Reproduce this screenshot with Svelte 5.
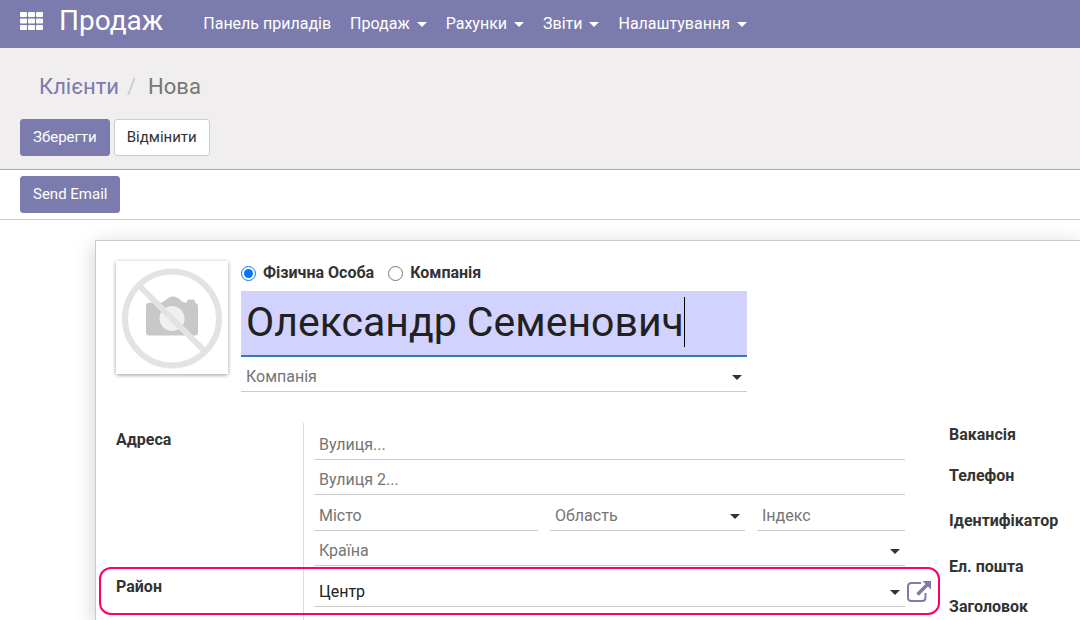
<script lang="ts">
    // Top menu entries
    const menu = [
        { title: 'Панель приладів', dropdown: false },
        { title: 'Продаж', dropdown: true },
        { title: 'Рахунки', dropdown: true },
        { title: 'Звіти', dropdown: true },
        { title: 'Налаштування', dropdown: true }
    ];

    // Labels of the second column
    const contactLabels = ['Вакансія', 'Телефон', 'Ідентифікатор', 'Ел. пошта', 'Заголовок'];

    // Form state
    let companyType = $state('person');
    let name = $state('Олександр Семенович');
    let parent = $state('');
    let street = $state('');
    let street2 = $state('');
    let city = $state('');
    let region = $state('');
    let zip = $state('');
    let country = $state('');
    let district = $state('Центр');
</script>

{#snippet caret()}
    <svg class="caret" viewBox="0 0 10 5" width="10" height="5" aria-hidden="true">
        <path d="M0 0h10L5 5z" fill="currentColor" />
    </svg>
{/snippet}

<div class="app">
    <!-- Main navbar -->
    <nav class="navbar">
        <button class="apps" aria-label="Apps">
            <svg viewBox="0 0 23 18" width="23" height="18" fill="currentColor">
                {#each [0, 8, 16] as x}
                    {#each [0, 6.5, 13] as y}
                        <rect {x} {y} width="7" height="5" rx="1" />
                    {/each}
                {/each}
            </svg>
        </button>
        <a class="brand" href="#sales">Продаж</a>
        <ul class="menu">
            {#each menu as item}
                <li>
                    <a href="#menu">{item.title}{#if item.dropdown}{@render caret()}{/if}</a>
                </li>
            {/each}
        </ul>
    </nav>

    <!-- Breadcrumb and form buttons -->
    <header class="control-panel">
        <div class="breadcrumb">
            <a href="#customers">Клієнти</a>
            <span class="slash">/</span>
            <span>Нова</span>
        </div>
        <div class="buttons">
            <button class="btn primary">Зберегти</button>
            <button class="btn">Відмінити</button>
        </div>
    </header>

    <div class="statusbar">
        <button class="btn primary">Send Email</button>
    </div>

    <main class="content">
        <div class="sheet">
            <div class="head">
                <div class="avatar">
                    <svg viewBox="0 0 112 112" width="112" height="113" aria-hidden="true">
                        <path
                            d="M30 45q0-4 4-4h11q2 0 4-2 4-4 8-4t8 4q2 2 4 2h2v-1q0-2 2-2h4q2 0 2 2v1q3 1 3 4v26q0 3-3 3H33q-3 0-3-3z"
                            fill="#c8c8c8"
                        />
                        <circle cx="56" cy="57" r="12.5" fill="#f0f0f0" />
                        <circle cx="56" cy="57" r="47" fill="none" stroke="#e3e3e3" stroke-width="6" />
                        <path d="M23 24l66 66" stroke="#e3e3e3" stroke-width="6" />
                    </svg>
                </div>

                <div class="identity">
                    <div class="types">
                        <label><input type="radio" value="person" bind:group={companyType} />Фізична Особа</label>
                        <label><input type="radio" value="company" bind:group={companyType} />Компанія</label>
                    </div>
                    <div class="name">
                        <input type="text" aria-label="Ім'я" bind:value={name} />
                        <span class="cursor"></span>
                    </div>
                    <div class="select">
                        <select class="field" class:empty={!parent} aria-label="Компанія" bind:value={parent}>
                            <option value="">Компанія</option>
                        </select>
                        {@render caret()}
                    </div>
                </div>
            </div>

            <div class="groups">
                <div class="group">
                    <div class="row">
                        <label class="label" for="street">Адреса</label>
                        <div class="cell address">
                            <input id="street" class="field" placeholder="Вулиця..." bind:value={street} />
                            <input class="field" placeholder="Вулиця 2..." aria-label="Вулиця 2" bind:value={street2} />
                            <div class="city">
                                <input class="field" placeholder="Місто" aria-label="Місто" bind:value={city} />
                                <div class="select">
                                    <select class="field" class:empty={!region} aria-label="Область" bind:value={region}>
                                        <option value="">Область</option>
                                    </select>
                                    {@render caret()}
                                </div>
                                <input class="field" placeholder="Індекс" aria-label="Індекс" bind:value={zip} />
                            </div>
                            <div class="select">
                                <select class="field" class:empty={!country} aria-label="Країна" bind:value={country}>
                                    <option value="">Країна</option>
                                </select>
                                {@render caret()}
                            </div>
                        </div>
                    </div>

                    <div class="row district">
                        <label class="label" for="district">Район</label>
                        <div class="cell">
                            <div class="select">
                                <select id="district" class="field" bind:value={district}>
                                    <option>Центр</option>
                                </select>
                                {@render caret()}
                            </div>
                        </div>
                        <button class="external" aria-label="Відкрити">
                            <svg viewBox="0 0 25 22" width="25" height="22" fill="none" stroke="currentColor">
                                <path d="M14 3H4.500Q1 3 1 6.500V17.500Q1 21 4.500 21H15Q18.500 21 18.500 17.500V13" stroke-width="2" />
                                <path d="M10.500 14.500L20 5" stroke-width="3.500" />
                                <path d="M15.500 1H24V9.500z" fill="currentColor" stroke="none" />
                            </svg>
                        </button>
                    </div>
                </div>

                <div class="contact">
                    {#each contactLabels as label}
                        <span class="label">{label}</span>
                    {/each}
                </div>
            </div>
        </div>
    </main>
</div>

<style>
    :global(body) {
        margin: 0;
    }

    .app {
        display: flex;
        flex-direction: column;
        height: 100vh;
        overflow: hidden;
        background: #fff;
        color: #333;
        font-family: Roboto, sans-serif;
        font-size: 16px;
        line-height: 24px;
    }

    .app * {
        box-sizing: border-box;
    }

    a {
        color: #7c7bad;
        text-decoration: none;
    }

    button, input, select {
        margin: 0;
        font: inherit;
        color: inherit;
    }

    .caret {
        flex: none;
    }

    /* Navbar */
    .navbar {
        display: flex;
        flex: none;
        align-items: center;
        height: 48px;
        padding: 0 20px;
        background: #7c7bad;
        color: #fff;
    }

    .navbar a {
        color: #fff;
    }

    .apps {
        display: flex;
        padding: 0 0 6px;
        border: none;
        background: none;
    }

    .brand {
        margin-left: 16px;
        padding-bottom: 6px;
        font-size: 28px;
    }

    .menu {
        display: flex;
        gap: 19px;
        margin: 0 0 0 40px;
        padding: 0;
        list-style: none;
    }

    .menu a {
        display: flex;
        align-items: center;
        gap: 7px;
    }

    /* Control panel */
    .control-panel {
        flex: none;
        padding: 24px 20px 13px;
        border-bottom: 1px solid #a8a8a8;
        background: #f0eeee;
    }

    .breadcrumb {
        display: flex;
        gap: 8px;
        margin-bottom: 17px;
        padding-left: 19px;
        color: #777;
        font-size: 22px;
        line-height: 30px;
    }

    .slash {
        margin-right: 4px;
        color: #ccc;
    }

    .buttons {
        display: flex;
        gap: 4px;
    }

    .btn {
        height: 37px;
        padding: 0 12px 2px;
        border: 1px solid #ccc;
        border-radius: 3px;
        background: #fff;
        font-size: 15px;
    }

    .btn.primary {
        border-color: #7c7bad;
        background: #7c7bad;
        color: #fff;
    }

    .statusbar {
        flex: none;
        padding: 6px 20px;
        border-bottom: 1px solid #cacaca;
    }

    .statusbar .btn {
        display: block;
    }

    /* Sheet */
    .content {
        flex: 1;
        min-height: 0;
        padding: 20px 0 0 95px;
        overflow: hidden;
    }

    .sheet {
        height: 100%;
        padding: 20px 0 0 20px;
        border: solid #c8c8d3;
        border-width: 1px 0 0 1px;
        box-shadow: 0 5px 20px rgba(0, 0, 0, 0.2);
    }

    .head {
        display: flex;
        gap: 13px;
    }

    .avatar {
        flex: none;
        width: 112px;
        height: 113px;
        box-shadow: 0 1px 4px rgba(0, 0, 0, 0.4);
    }

    .identity {
        width: 506px;
    }

    .types {
        display: flex;
        gap: 14px;
        height: 30px;
        font-weight: 700;
    }

    .types label {
        display: flex;
        align-items: center;
        gap: 7px;
        height: 24px;
    }

    .types input {
        width: 15px;
        height: 15px;
    }

    .name {
        display: flex;
        align-items: center;
        height: 66px;
        padding-bottom: 3px;
        border-bottom: 2px solid #337ab7;
        background: #d2d2ff;
        color: #212121;
        font-size: 41px;
    }

    .name input {
        field-sizing: content;
        height: 60px;
        padding: 0 0 0 5px;
        border: none;
        outline: none;
        background: none;
    }

    .cursor {
        width: 1px;
        height: 50px;
        background: #000;
    }

    /* Fields */
    .field {
        width: 100%;
        min-width: 0;
        height: 35px;
        padding: 5px 5px 0;
        border: none;
        border-bottom: 1px solid #ccc;
        border-radius: 0;
        outline: none;
        background: none;
        color: #212121;
        appearance: none;
    }

    .field.empty, .field::placeholder {
        color: #757575;
        opacity: 1;
    }

    .select {
        display: grid;
        align-items: center;
    }

    .select > .field, .select > .caret {
        grid-area: 1 / 1;
    }

    .select > .caret {
        justify-self: end;
        margin: 6px 5px 0 0;
        pointer-events: none;
    }

    /* Groups */
    .groups {
        display: flex;
        gap: 9px;
        margin-top: 31px;
    }

    .group {
        flex: 1;
    }

    .row {
        display: flex;
        align-items: stretch;
    }

    .label {
        font-weight: 700;
    }

    .row .label {
        width: 187px;
        padding-top: 5px;
    }

    .cell {
        flex: 1;
        padding: 2px 0 0 10px;
        border-left: 1px solid #ddd;
    }

    .address {
        margin-right: 35px;
    }

    .city {
        display: grid;
        grid-template-columns: 224px 1fr 148px;
        gap: 12px;
        margin-top: 1px;
    }

    /* Highlighted row */
    .district {
        position: relative;
        min-height: 60px;
    }

    .row.district .label {
        padding-top: 9px;
    }

    .district .cell {
        padding-top: 6px;
    }

    .district::after {
        content: '';
        position: absolute;
        inset: 1px 0 auto -17px;
        height: 44px;
        border: 2px solid #fa006e;
        border-radius: 12px;
        pointer-events: none;
    }

    .external {
        align-self: flex-start;
        width: 35px;
        padding: 14px 8px 0 2px;
        border: none;
        background: none;
        color: #7c7bad;
    }

    .external svg {
        display: block;
    }

    .contact {
        display: grid;
        grid-template-rows: 41px 45px 46px 40px 24px;
        align-content: start;
        width: 131px;
    }
</style>
